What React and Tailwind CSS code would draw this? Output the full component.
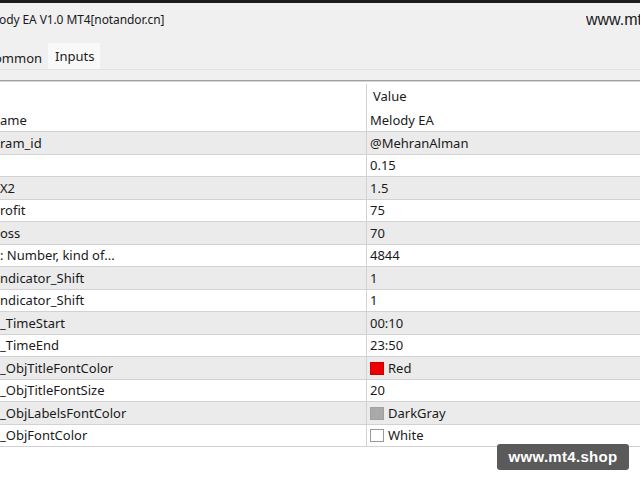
import React from "react";

const rows = [
  { n: "ram_id", v: "@MehranAlman" },
  { n: "", v: "0.15" },
  { n: "X2", v: "1.5" },
  { n: "rofit", v: "75" },
  { n: "oss", v: "70" },
  { n: ": Number, kind of...", v: "4844" },
  { n: "ndicator_Shift", v: "1" },
  { n: "ndicator_Shift", v: "1" },
  { n: "_TimeStart", v: "00:10" },
  { n: "_TimeEnd", v: "23:50" },
  { n: "_ObjTitleFontColor", v: "Red", sw: "red" },
  { n: "_ObjTitleFontSize", v: "20" },
  { n: "_ObjLabelsFontColor", v: "DarkGray", sw: "gray" },
  { n: "_ObjFontColor", v: "White", sw: "white" },
];

function Swatch({ kind }) {
  if (kind === "red")
    return <span className="inline-block w-[14px] h-[13px] bg-[#ee0000] mr-[4px] border border-[#cc0000]" />;
  if (kind === "gray")
    return <span className="inline-block w-[14px] h-[13px] bg-[#a9a9a9] mr-[4px] border border-[#a0a0a0]" />;
  return <span className="inline-block w-[14px] h-[13px] bg-white mr-[4px] border border-[#9a9a9a]" />;
}

export default function App() {
  return (
    <div
      className="w-[640px] h-[480px] overflow-hidden bg-white relative text-[#1a1a1a]"
      style={{ fontFamily: '"Noto Sans", "Segoe UI", sans-serif' }}
    >
      <div className="h-[3px] bg-[#1c1c1c]" />
      <div className="h-[77px] bg-[#f0f0f0] flex flex-col">
        <div className="h-[34px] flex items-center justify-between">
          <span className="text-[12px] leading-none ml-[-1px] tracking-[-0.1px]">ody EA V1.0 MT4[notandor.cn]</span>
          <span
            className="text-[16px] leading-none text-[#1a1a1a] w-[54px] overflow-hidden whitespace-nowrap"
            style={{ fontFamily: '"Liberation Sans", Arial, sans-serif' }}
          >
            www.mt4.shop
          </span>
        </div>
        <div className="h-[33px] flex items-end border-b border-[#e2e2e2]">
          <div className="h-[22px] w-[48px] flex items-center text-[13px] leading-none ml-[-6px]">ommon</div>
          <div className="h-[26px] w-[52px] ml-[6px] bg-[#f9f9f9] flex items-start pt-[7px] pl-[7px] text-[13px] leading-none">
            Inputs
          </div>
        </div>
        <div className="flex-1" />
      </div>
      <div className="h-[1px] bg-[#a0a0a0]" />
      <div className="h-[1px] bg-[#d6d6d6]" />
      <div className="text-[13px] leading-none">
        <div className="flex h-[27px]">
          <div className="w-[366px]" />
          <div className="flex-1 border-l border-[#d2d2d2] mt-[2px] flex items-center pl-[6px]">Value</div>
        </div>
        <div className="flex h-[23px] border-b border-[#d2d2d2]">
          <div className="w-[366px] flex items-center">ame</div>
          <div className="flex-1 border-l border-[#d2d2d2] flex items-center pl-[3px]">Melody EA</div>
        </div>
        {rows.map((r, i) => (
          <div
            key={i}
            className={`flex h-[22.5px] border-b border-[#d2d2d2] ${i % 2 === 0 ? "bg-[#ebebeb]" : "bg-white"}`}
          >
            <div className="w-[366px] flex items-center whitespace-nowrap overflow-hidden pt-[1px]">{r.n}</div>
            <div className="flex-1 border-l border-[#d2d2d2] flex items-center pl-[3px] pt-[1px]">
              {r.sw && <Swatch kind={r.sw} />}
              {r.v}
            </div>
          </div>
        ))}
      </div>
      <div
        className="absolute left-[497px] top-[444px] w-[132px] h-[26px] rounded-[3px] bg-[#5a5a5a] text-white text-[15px] font-bold flex items-center justify-center tracking-[0.3px]"
        style={{ fontFamily: '"Liberation Sans", Arial, sans-serif' }}
      >
        www.mt4.shop
      </div>
    </div>
  );
}
